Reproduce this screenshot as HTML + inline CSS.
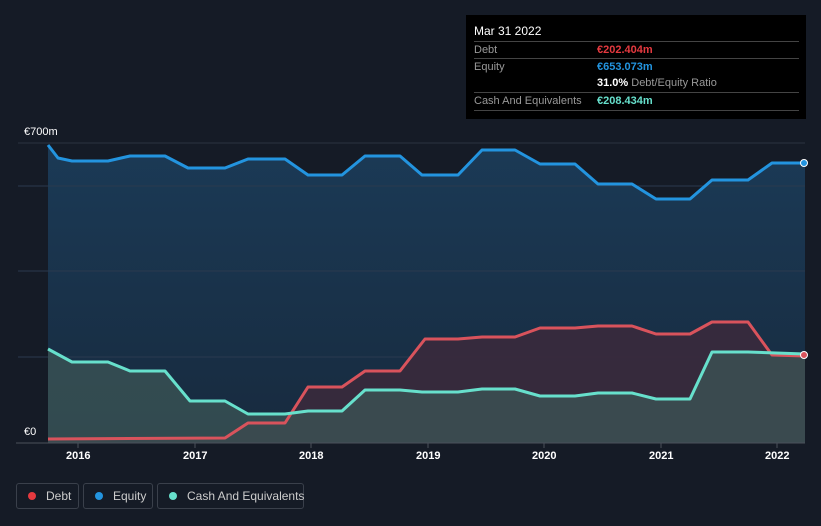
<!DOCTYPE html>
<html><head><meta charset="utf-8"><style>
html,body{margin:0;background:#151b26;width:821px;height:526px;overflow:hidden;font-family:"Liberation Sans",sans-serif;position:relative}
.tt{position:absolute;left:466px;top:15px;width:340px;height:104px;background:#000;color:#fff;font-size:11px}
.row{position:absolute;left:8px;width:325px;border-top:1px solid #444;height:17px;line-height:17px}
.l{color:#999;position:absolute;left:0}.v{position:absolute;left:123px;font-weight:bold}
.lg{position:absolute;top:483px;height:26px;border:1px solid #3a404b;border-radius:3px;color:#ccc;font-size:12px;line-height:24px;box-sizing:border-box;white-space:nowrap}
.dot{display:inline-block;width:8px;height:8px;border-radius:50%;margin:0 10px 0 11px}
.yr{position:absolute;top:450px;color:#fff;font-size:11px;font-weight:bold}
</style></head><body>
<svg width="821" height="526" style="position:absolute;left:0;top:0">
<defs>
<linearGradient id="eg" x1="0" y1="0" x2="0" y2="1"><stop offset="0" stop-color="#1b3a56"/><stop offset="1" stop-color="#172a3e"/></linearGradient>
</defs>
<line x1="18" y1="143" x2="805" y2="143" stroke="#2b3340"/>
<path d="M48,145 L58,158 L72,161 L108,161 L130,156 L165,156 L188,168 L225,168 L248,159 L285,159 L308,175 L342,175 L365,156 L400,156 L422,175 L458,175 L482,150 L515,150 L540,164 L575,164 L598,184 L632,184 L656,199 L690,199 L712,180 L748,180 L772,163 L805,163 L805,443 L48,443Z" fill="url(#eg)"/>
<g stroke="#2a3a4e" stroke-width="1"><line x1="18" y1="186" x2="805" y2="186"/><line x1="18" y1="271" x2="805" y2="271"/><line x1="18" y1="357" x2="805" y2="357"/></g>
<path d="M48,439 L225,438 L248,423 L285,423 L308,387 L342,387 L365,371 L400,371 L425,339 L458,339 L482,337 L515,337 L540,328 L575,328 L598,326 L632,326 L656,334 L690,334 L712,322 L748,322 L772,355 L805,356 L805,443 L48,443Z" fill="#3a2a3c" opacity="0.9"/>
<path d="M48,349 L72,362 L108,362 L130,371 L165,371 L190,401 L225,401 L248,414 L285,414 L308,411 L342,411 L365,390 L400,390 L422,392 L458,392 L482,389 L515,389 L540,396 L575,396 L598,393 L632,393 L656,399 L690,399 L712,352 L748,352 L805,354 L805,443 L48,443Z" fill="#3c5556" opacity="0.75"/>
<path d="M48,145 L58,158 L72,161 L108,161 L130,156 L165,156 L188,168 L225,168 L248,159 L285,159 L308,175 L342,175 L365,156 L400,156 L422,175 L458,175 L482,150 L515,150 L540,164 L575,164 L598,184 L632,184 L656,199 L690,199 L712,180 L748,180 L772,163 L805,163" fill="none" stroke="#2394df" stroke-width="3" stroke-linejoin="round"/>
<path d="M48,439 L225,438 L248,423 L285,423 L308,387 L342,387 L365,371 L400,371 L425,339 L458,339 L482,337 L515,337 L540,328 L575,328 L598,326 L632,326 L656,334 L690,334 L712,322 L748,322 L772,355 L805,356" fill="none" stroke="#d9535c" stroke-width="3" stroke-linejoin="round"/>
<path d="M48,349 L72,362 L108,362 L130,371 L165,371 L190,401 L225,401 L248,414 L285,414 L308,411 L342,411 L365,390 L400,390 L422,392 L458,392 L482,389 L515,389 L540,396 L575,396 L598,393 L632,393 L656,399 L690,399 L712,352 L748,352 L805,354" fill="none" stroke="#67e0cc" stroke-width="3" stroke-linejoin="round"/>
<line x1="16" y1="443" x2="805" y2="443" stroke="#4a505b"/>
<g stroke="#4a505b"><line x1="78" y1="443" x2="78" y2="448"/><line x1="195" y1="443" x2="195" y2="448"/><line x1="311" y1="443" x2="311" y2="448"/><line x1="428" y1="443" x2="428" y2="448"/><line x1="544" y1="443" x2="544" y2="448"/><line x1="661" y1="443" x2="661" y2="448"/><line x1="777" y1="443" x2="777" y2="448"/></g>
<circle cx="804" cy="163" r="3.5" fill="#2394df" stroke="#fff"/>
<circle cx="804" cy="355" r="3.5" fill="#d9535c" stroke="#fff"/>
<text x="24" y="135" fill="#fff" font-size="11" font-family="Liberation Sans">€700m</text>
<text x="24" y="435" fill="#fff" font-size="11" font-family="Liberation Sans">€0</text>
</svg>
<div class="yr" style="left:66px">2016</div><div class="yr" style="left:183px">2017</div><div class="yr" style="left:299px">2018</div><div class="yr" style="left:416px">2019</div><div class="yr" style="left:532px">2020</div><div class="yr" style="left:649px">2021</div><div class="yr" style="left:765px">2022</div>
<div class="tt">
<div style="position:absolute;left:8px;top:9px;font-size:12px">Mar 31 2022</div>
<div class="row" style="top:26px"><span class="l">Debt</span><span class="v" style="color:#e5393f">€202.404m</span></div>
<div class="row" style="top:43px"><span class="l">Equity</span><span class="v" style="color:#2394df">€653.073m</span></div>
<div class="row" style="top:60px;border:0"><span class="v">31.0% <span style="color:#999;font-weight:normal">Debt/Equity Ratio</span></span></div>
<div class="row" style="top:77px"><span class="l">Cash And Equivalents</span><span class="v" style="color:#67e0cc">€208.434m</span></div>
<div class="row" style="top:95px;height:0"></div>
</div>
<div class="lg" style="left:16px;width:63px"><span class="dot" style="background:#e5393f"></span>Debt</div>
<div class="lg" style="left:83px;width:70px"><span class="dot" style="background:#2394df"></span>Equity</div>
<div class="lg" style="left:157px;width:147px"><span class="dot" style="background:#67e0cc"></span>Cash And Equivalents</div>
</body></html>
